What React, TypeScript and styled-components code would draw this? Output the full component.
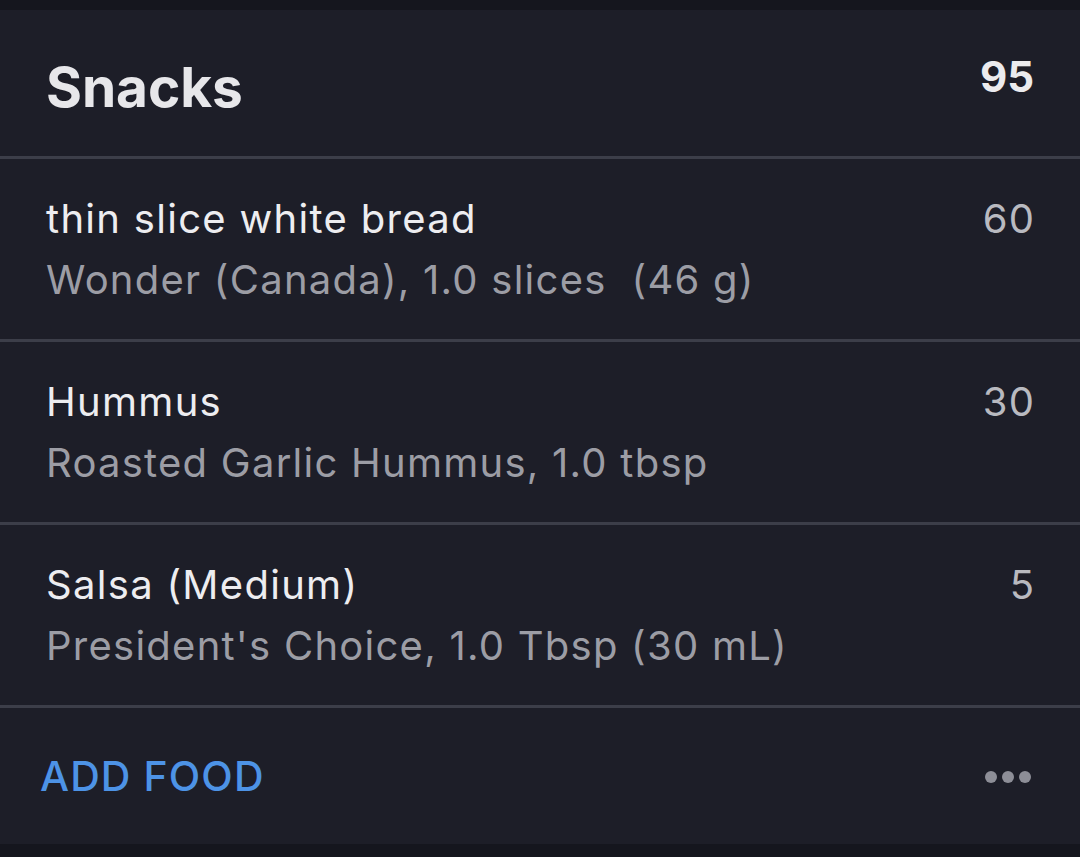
import React from "react";
import styled, { createGlobalStyle } from "styled-components";

const GlobalStyle = createGlobalStyle`
  html, body {
    margin: 0;
    padding: 0;
    background: #15161e;
  }
  body {
    font-family: Inter, "Noto Sans", "Liberation Sans", sans-serif;
    -webkit-font-smoothing: antialiased;
  }
`;

const Page = styled.div`
  width: 1080px;
  height: 857px;
  background: #15161e;
  padding: 10px 0 13px;
  box-sizing: border-box;
`;

const Card = styled.section`
  background: #1d1e28;
  display: flex;
  flex-direction: column;
`;

const Header = styled.header`
  display: flex;
  justify-content: space-between;
  align-items: flex-start;
  padding: 44px 46px 35px 46px;
  border-bottom: 3px solid #3c3e49;
`;

const Title = styled.h2`
  margin: 0;
  font-size: 55px;
  line-height: 67px;
  font-weight: 700;
  color: #e7e7ea;
  letter-spacing: -0.1px;
`;

const Total = styled.span`
  margin-top: -2px;
  font-size: 42px;
  line-height: 50px;
  font-weight: 700;
  color: #ebebee;
`;

const Row = styled.div`
  display: flex;
  justify-content: space-between;
  align-items: flex-start;
  padding: 35px 46px 35px 46px;
  border-bottom: 3px solid #3c3e49;
`;

const Info = styled.div`
  display: flex;
  flex-direction: column;
  gap: 12px;
`;

const Name = styled.div`
  font-size: 40px;
  line-height: 49px;
  letter-spacing: 1.3px;
  color: #ededf0;
`;

const Detail = styled.div`
  font-size: 40px;
  line-height: 49px;
  letter-spacing: 1.25px;
  color: #9c9da5;
  white-space: pre;
`;

const Calories = styled.span`
  font-size: 40px;
  line-height: 49px;
  letter-spacing: 1.3px;
  margin-right: -1.3px;
  color: #b9bac0;
`;

const Footer = styled.footer`
  display: flex;
  justify-content: space-between;
  align-items: center;
  padding: 44px 46px 43px 40px;
`;

const AddButton = styled.button`
  border: none;
  background: none;
  padding: 0;
  font-family: inherit;
  font-size: 41px;
  line-height: 49px;
  font-weight: 500;
  letter-spacing: 1.1px;
  color: #4d93e6;
  cursor: pointer;
`;

const MoreButton = styled.button`
  display: flex;
  gap: 5px;
  border: none;
  background: none;
  padding: 0;
  margin-right: 3px;
  cursor: pointer;
`;

const Dot = styled.span`
  width: 12px;
  height: 12px;
  border-radius: 50%;
  background: #8d8e97;
`;

type Entry = {
  name: string;
  detail: string;
  calories: number;
};

const entries: Entry[] = [
  {
    name: "thin slice white bread",
    detail: "Wonder (Canada), 1.0 slices  (46 g)",
    calories: 60,
  },
  {
    name: "Hummus",
    detail: "Roasted Garlic Hummus, 1.0 tbsp",
    calories: 30,
  },
  {
    name: "Salsa (Medium)",
    detail: "President's Choice, 1.0 Tbsp (30 mL)",
    calories: 5,
  },
];

const App = () => {
  const total = entries.reduce((sum, e) => sum + e.calories, 0);

  return (
    <>
      <GlobalStyle />
      <Page>
        <Card>
          <Header>
            <Title>Snacks</Title>
            <Total>{total}</Total>
          </Header>
          {entries.map((entry) => (
            <Row key={entry.name}>
              <Info>
                <Name>{entry.name}</Name>
                <Detail>{entry.detail}</Detail>
              </Info>
              <Calories>{entry.calories}</Calories>
            </Row>
          ))}
          <Footer>
            <AddButton>ADD FOOD</AddButton>
            <MoreButton aria-label="More">
              <Dot />
              <Dot />
              <Dot />
            </MoreButton>
          </Footer>
        </Card>
      </Page>
    </>
  );
};

export default App;
